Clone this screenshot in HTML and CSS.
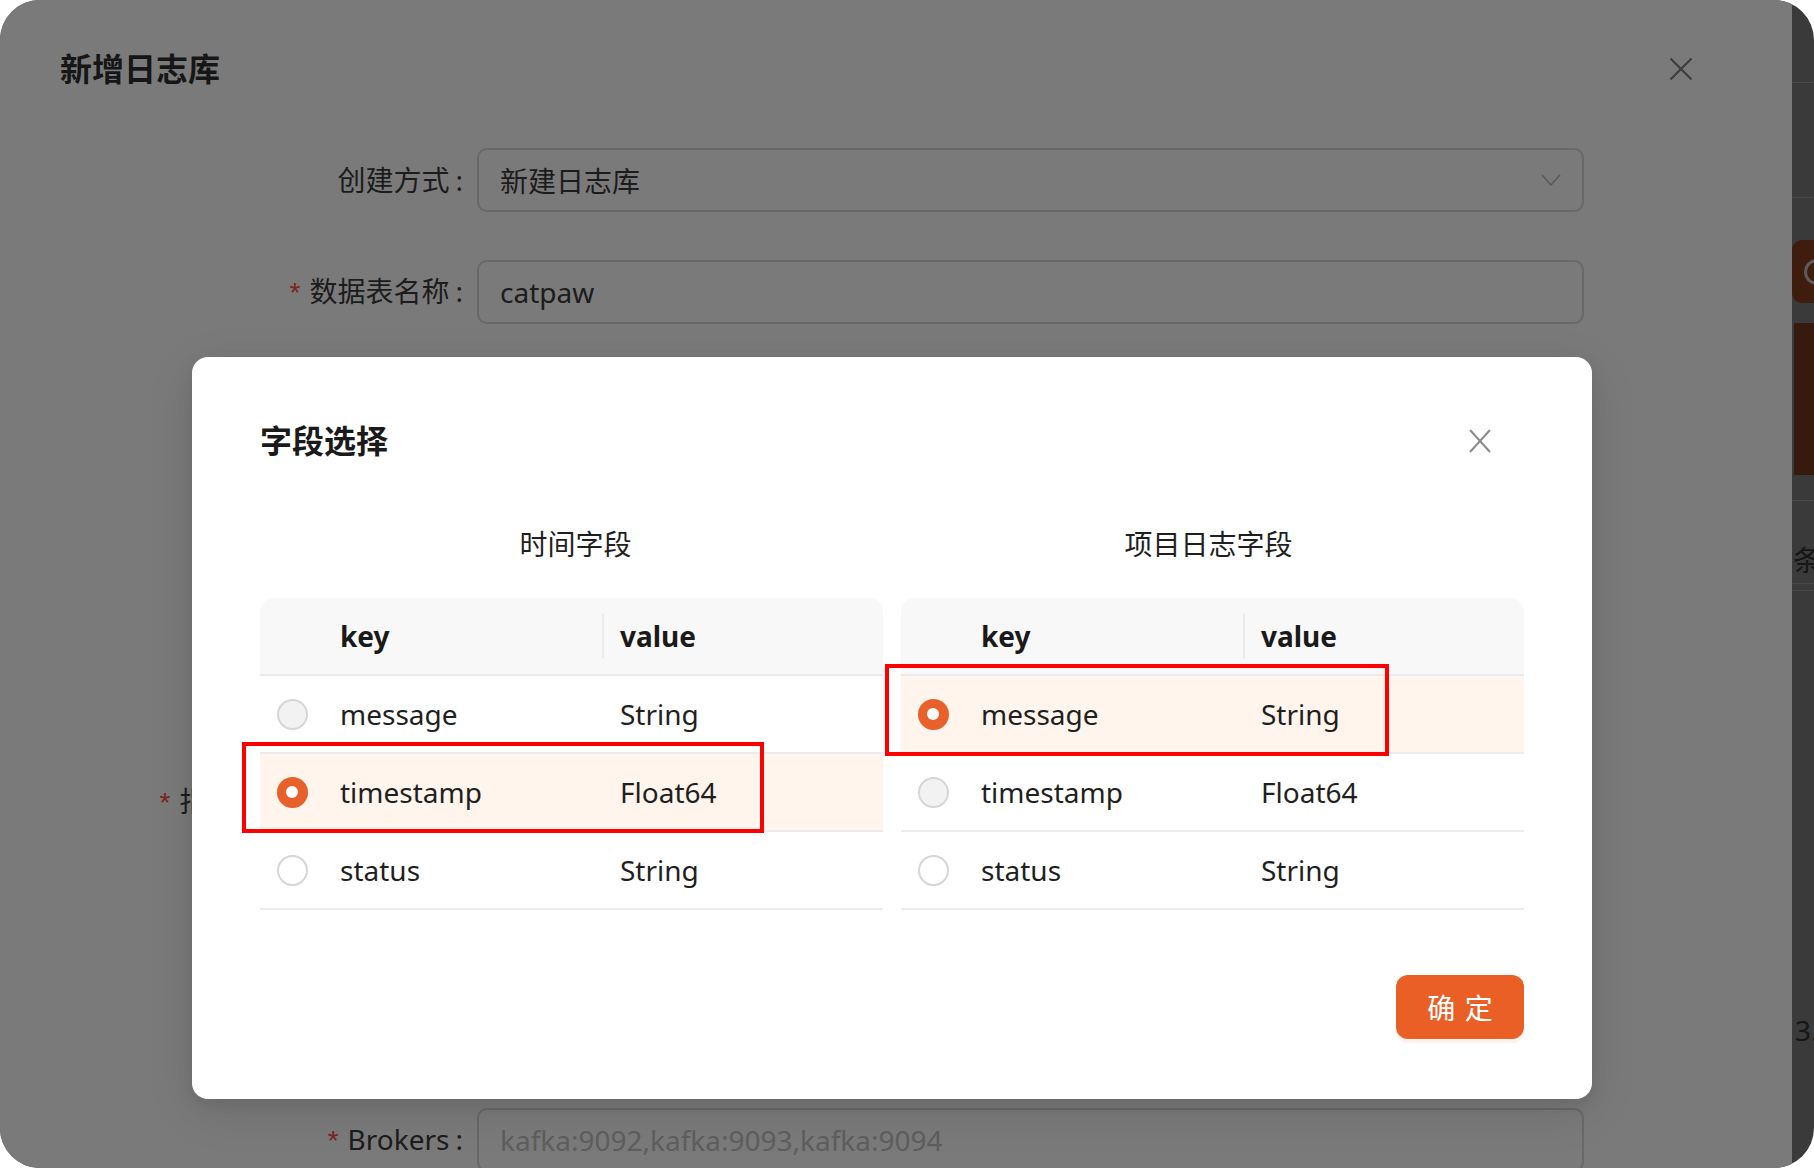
FILE: index.html
```html
<!DOCTYPE html>
<html lang="zh-CN">
<head>
<meta charset="utf-8">
<title>新增日志库 - 字段选择</title>
<link rel="stylesheet" href="styles.css">
</head>
<body>
<div class="screen">
  <section class="drawer">
    <header class="drawer-head">
      <h1 class="drawer-title">新增日志库</h1>
      <svg class="drawer-close" width="24" height="24" viewBox="0 0 24 24"><path d="M1.5 1.5L22.5 22.5M22.5 1.5L1.5 22.5" stroke="currentColor" stroke-width="2.2" fill="none"/></svg>
    </header>
    <div class="form">
      <div class="form-row">
        <label class="form-label">创建方式<span class="colon">:</span></label>
        <div class="field">
          <span>新建日志库</span>
          <svg class="chevron" width="20" height="12" viewBox="0 0 20 12"><path d="M1 1L10 11L19 1" stroke="currentColor" stroke-width="1.6" fill="none"/></svg>
        </div>
      </div>
      <div class="form-row">
        <label class="form-label"><span class="req">*</span>数据表名称<span class="colon">:</span></label>
        <div class="field"><span>catpaw</span></div>
      </div>
      <div class="form-row row-map">
        <label class="form-label"><span class="req">*</span><span class="wide">指定时间及日志字段</span><span class="colon">:</span></label>
        <div class="field"></div>
      </div>
      <div class="form-row row-brokers">
        <label class="form-label"><span class="req">*</span>Brokers<span class="colon">:</span></label>
        <div class="field"><span class="placeholder">kafka:9092,kafka:9093,kafka:9094</span></div>
      </div>
    </div>
  </section>

  <aside class="page-edge">
    <div class="edge-bar edge-bar-1"></div>
    <div class="edge-bar edge-bar-2"></div>
    <div class="edge-btn"><span class="edge-ring"></span></div>
    <div class="edge-block"></div>
    <div class="edge-line"></div>
    <div class="edge-text">条</div>
    <div class="edge-line2"></div>
    <div class="edge-text edge-num">3.</div>
  </aside>

  <div class="modal">
    <header class="modal-head">
      <h2 class="modal-title">字段选择</h2>
      <svg class="modal-close" width="22" height="24" viewBox="0 0 22 24"><path d="M1 1L21 23M21 1L1 23" stroke="currentColor" stroke-width="2" fill="none"/></svg>
    </header>

    <div class="columns">
      <div class="col col-time">
        <div class="col-title">时间字段</div>
        <div class="table">
          <div class="thead">
            <div class="cell"></div>
            <div class="cell">key</div>
            <div class="cell th-value">value</div>
          </div>
          <div class="tr">
            <div class="radio-cell"><span class="radio disabled"></span></div>
            <div class="cell">message</div>
            <div class="cell">String</div>
          </div>
          <div class="tr selected">
            <div class="radio-cell"><span class="radio checked"></span></div>
            <div class="cell">timestamp</div>
            <div class="cell">Float64</div>
          </div>
          <div class="tr">
            <div class="radio-cell"><span class="radio"></span></div>
            <div class="cell">status</div>
            <div class="cell">String</div>
          </div>
        </div>
      </div>

      <div class="col col-log">
        <div class="col-title">项目日志字段</div>
        <div class="table">
          <div class="thead">
            <div class="cell"></div>
            <div class="cell">key</div>
            <div class="cell th-value">value</div>
          </div>
          <div class="tr selected">
            <div class="radio-cell"><span class="radio checked"></span></div>
            <div class="cell">message</div>
            <div class="cell">String</div>
          </div>
          <div class="tr">
            <div class="radio-cell"><span class="radio disabled"></span></div>
            <div class="cell">timestamp</div>
            <div class="cell">Float64</div>
          </div>
          <div class="tr">
            <div class="radio-cell"><span class="radio"></span></div>
            <div class="cell">status</div>
            <div class="cell">String</div>
          </div>
        </div>
      </div>
    </div>

    <footer class="modal-foot">
      <button class="btn-primary">确 定</button>
    </footer>

    <div class="mark mark-left"></div>
    <div class="mark mark-right"></div>
  </div>
</div>
</body>
</html>
```

FILE: styles.css
```css
* { box-sizing: border-box; }

html, body {
  margin: 0;
  background: #ffffff;
}

body {
  font-family: "Noto Sans", "Noto Sans CJK SC", sans-serif;
}

.screen {
  position: relative;
  width: 1814px;
  height: 1168px;
  display: flex;
  border-radius: 40px;
  overflow: hidden;
  background: #3a3a3a;
}

/* ---------- drawer underneath the mask ---------- */
.drawer {
  flex: none;
  width: 1792px;
  background: #7a7a7a;
  color: #1a1a1a;
}

.drawer-head {
  display: flex;
  justify-content: space-between;
  align-items: center;
  padding: 45px 99px 0 60px;
}

.drawer-title {
  margin: 0;
  font-size: 32px;
  line-height: 48px;
  font-weight: 700;
  color: #161616;
}

.drawer-close {
  display: block;
  color: #3e3e3e;
}

.form {
  margin-top: 55px;
  display: flex;
  flex-direction: column;
}

.form-row {
  display: grid;
  grid-template-columns: 463px 1107px;
  column-gap: 14px;
  align-items: center;
  height: 64px;
}

.form-row + .form-row { margin-top: 48px; }
.form-row.row-map { margin-top: 446px; }
.form-row.row-brokers { margin-top: 274px; }

.form-label {
  text-align: right;
  font-size: 28px;
  line-height: 40px;
  color: #1c1c1c;
  white-space: nowrap;
}

.colon { margin-left: 6px; }

.req {
  color: #7c2222;
  margin-right: 9px;
  font-family: "Liberation Sans", sans-serif;
}

.wide { letter-spacing: 2px; }

.field {
  height: 64px;
  border: 2px solid #686868;
  border-radius: 10px;
  padding: 0 21px 0 21px;
  display: flex;
  align-items: center;
  justify-content: space-between;
  font-size: 28px;
  color: #1c1c1c;
}

.chevron { color: #5a5a5a; display: block; }

.placeholder { color: #5e5e5e; }

/* ---------- page visible at right edge ---------- */
.page-edge {
  flex: 1;
  display: flex;
  flex-direction: column;
  overflow: hidden;
}

.edge-bar-1 { height: 83px; border-bottom: 1px solid #494949; }
.edge-bar-2 { height: 115px; border-bottom: 1px solid #454545; }

.edge-btn {
  margin-top: 42px;
  height: 63px;
  background: #3e1c0e;
  border-radius: 10px 0 0 10px;
  display: flex;
  align-items: center;
  padding-left: 12px;
}

.edge-ring {
  flex: none;
  width: 26px;
  height: 26px;
  border-radius: 50%;
  border: 3px solid #5b5b5b;
}

.edge-block {
  margin-top: 20px;
  margin-left: 2px;
  height: 152px;
  background: #371a0e;
}

.edge-line {
  margin-top: 25px;
  height: 1px;
  background: #474747;
}

.edge-text {
  margin-top: 39px;
  font-size: 28px;
  line-height: 40px;
  color: #161616;
  white-space: nowrap;
  padding-left: 1px;
}

.edge-line2 {
  margin-top: 3px;
  height: 8px;
  border-top: 1px solid #474747;
  border-bottom: 1px solid #474747;
}

.edge-num {
  margin-top: 419px;
  padding-left: 3px;
}

/* ---------- modal ---------- */
.modal {
  position: absolute;
  left: 192px;
  top: 357px;
  width: 1400px;
  padding: 60px 68px 60px;
  background: #ffffff;
  border-radius: 16px;
  box-shadow: 0 12px 48px rgba(0, 0, 0, 0.10), 0 6px 16px rgba(0, 0, 0, 0.08);
  color: #1f1f1f;
}

.modal-head {
  display: flex;
  justify-content: space-between;
  align-items: center;
  height: 48px;
}

.modal-title {
  margin: 0;
  font-size: 32px;
  line-height: 48px;
  font-weight: 700;
  color: #1a1a1a;
}

.modal-close {
  display: block;
  margin-right: 33px;
  color: #8a8a8a;
}

.columns {
  display: grid;
  grid-template-columns: 1fr 1fr;
  column-gap: 18px;
  margin-top: 59px;
}

.col-title {
  text-align: center;
  font-size: 28px;
  line-height: 40px;
  color: #1f1f1f;
}

.col-time .col-title { padding-left: 8px; }
.col-log .col-title { padding-right: 8px; }

.table { margin-top: 34px; }

.thead,
.tr {
  display: grid;
  grid-template-columns: 64px 280px 1fr;
  align-items: center;
}

.thead {
  height: 78px;
  background: #f8f8f8;
  border-radius: 14px 14px 0 0;
  border-bottom: 2px solid #ebebeb;
  font-weight: 700;
  color: #1a1a1a;
}

.tr {
  height: 78px;
  border-bottom: 2px solid #ececec;
}

.tr.selected { background: #fff5ec; }

.cell {
  padding-left: 16px;
  font-size: 28px;
  line-height: 40px;
}

.th-value { position: relative; }

.th-value::before {
  content: "";
  position: absolute;
  left: -2px;
  top: -2px;
  width: 2px;
  height: 44px;
  background: #ebebeb;
}

.radio-cell {
  display: flex;
  justify-content: center;
  align-items: center;
}

.radio {
  width: 31px;
  height: 31px;
  border-radius: 50%;
  border: 2px solid #d6d6d6;
  background: #ffffff;
}

.radio.disabled { background: #f2f2f2; }

.radio.checked {
  border: none;
  background: #e8602a;
  display: flex;
  align-items: center;
  justify-content: center;
}

.radio.checked::after {
  content: "";
  width: 12px;
  height: 12px;
  border-radius: 50%;
  background: #ffffff;
}

.modal-foot {
  display: flex;
  justify-content: flex-end;
  margin-top: 65px;
}

.btn-primary {
  width: 128px;
  height: 64px;
  border: none;
  border-radius: 12px;
  background: #e95f26;
  color: #ffffff;
  font-family: inherit;
  font-size: 28px;
  letter-spacing: 1px;
  padding: 0 0 0 1px;
  box-shadow: 0 4px 0 rgba(233, 95, 38, 0.08);
}

/* annotation boxes */
.mark {
  position: absolute;
  border: 4px solid #ff0000;
  pointer-events: none;
}

.mark-left {
  left: 50px;
  top: 385px;
  width: 522px;
  height: 91px;
}

.mark-right {
  left: 693px;
  top: 307px;
  width: 504px;
  height: 92px;
}
```
